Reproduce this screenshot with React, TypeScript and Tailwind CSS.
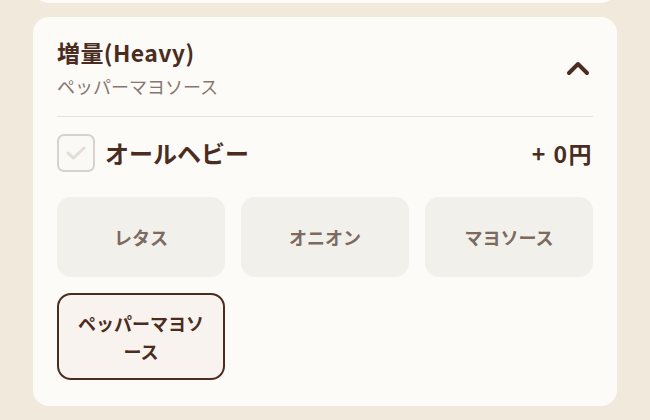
import { useState } from 'react';

const options = ['レタス', 'オニオン', 'マヨソース', 'ペッパーマヨソース'];

export default function App() {
  const [selected, setSelected] = useState<string>('ペッパーマヨソース');

  return (
    <div
      className="h-[420px] w-[650px] overflow-hidden bg-[#f1e9dc] px-[33px]"
      style={{ fontFamily: '"Noto Sans CJK JP", "Noto Sans", sans-serif' }}
    >
      {/* previous card (cut off at top) */}
      <div className="-mt-[20px] h-[23px] rounded-b-2xl bg-[#fdfbf7]" />

      <div className="mt-[14px] rounded-2xl bg-[#fdfbf7] px-6 pb-[26px] pt-[19px]">
        {/* header */}
        <div className="flex items-center justify-between border-b border-[#e8e2d9] pb-[18px]">
          <div>
            <h2 className="text-[23px] font-bold leading-[32px] tracking-[0.4px] text-[#4a2c20]">増量(Heavy)</h2>
            <p className="mt-[6px] text-[18px] leading-[24px] text-[#85776f]">ペッパーマヨソース</p>
          </div>
          <svg width="24" height="16" viewBox="0 0 24 16" className="mr-[3px] mt-[2px]">
            <path d="M3 13 L12 4 L21 13" fill="none" stroke="#4a2c20" strokeWidth="4" strokeLinecap="round" strokeLinejoin="round" />
          </svg>
        </div>

        {/* all heavy row */}
        <div className="mt-[17px] flex items-center justify-between">
          <div className="flex items-center gap-[10px]">
            <div className="flex h-[38px] w-[38px] items-center justify-center rounded-[7px] border-2 border-[#d9d2ca] bg-[#fbf9f5]">
              <svg width="22" height="16" viewBox="0 0 22 16">
                <path d="M3 8 L8.5 13 L19 3" fill="none" stroke="#e2ddd5" strokeWidth="3" strokeLinecap="round" strokeLinejoin="round" />
              </svg>
            </div>
            <span className="text-[24px] font-bold leading-none text-[#4a2c20]">オールヘビー</span>
          </div>
          <span className="text-[23px] font-bold leading-none tracking-[1.5px] text-[#4a2c20]">+ 0円</span>
        </div>

        {/* option grid */}
        <div className="mt-[25px] grid grid-cols-3 gap-[16px]">
          {options.map((o) => {
            const on = o === selected;
            return (
              <button
                key={o}
                onClick={() => setSelected(o)}
                className={
                  on
                    ? 'flex min-h-[87px] items-center justify-center rounded-[14px] border-2 border-[#4a2c20] bg-[#f8f3ee] px-3 text-[18px] font-bold leading-[28px] text-[#4a2c20]'
                    : 'flex min-h-[80px] items-center justify-center rounded-[14px] bg-[#f2f0eb] px-3 text-[18px] font-bold leading-[28px] text-[#7c6a61]'
                }
              >
                {o}
              </button>
            );
          })}
        </div>
      </div>
    </div>
  );
}
